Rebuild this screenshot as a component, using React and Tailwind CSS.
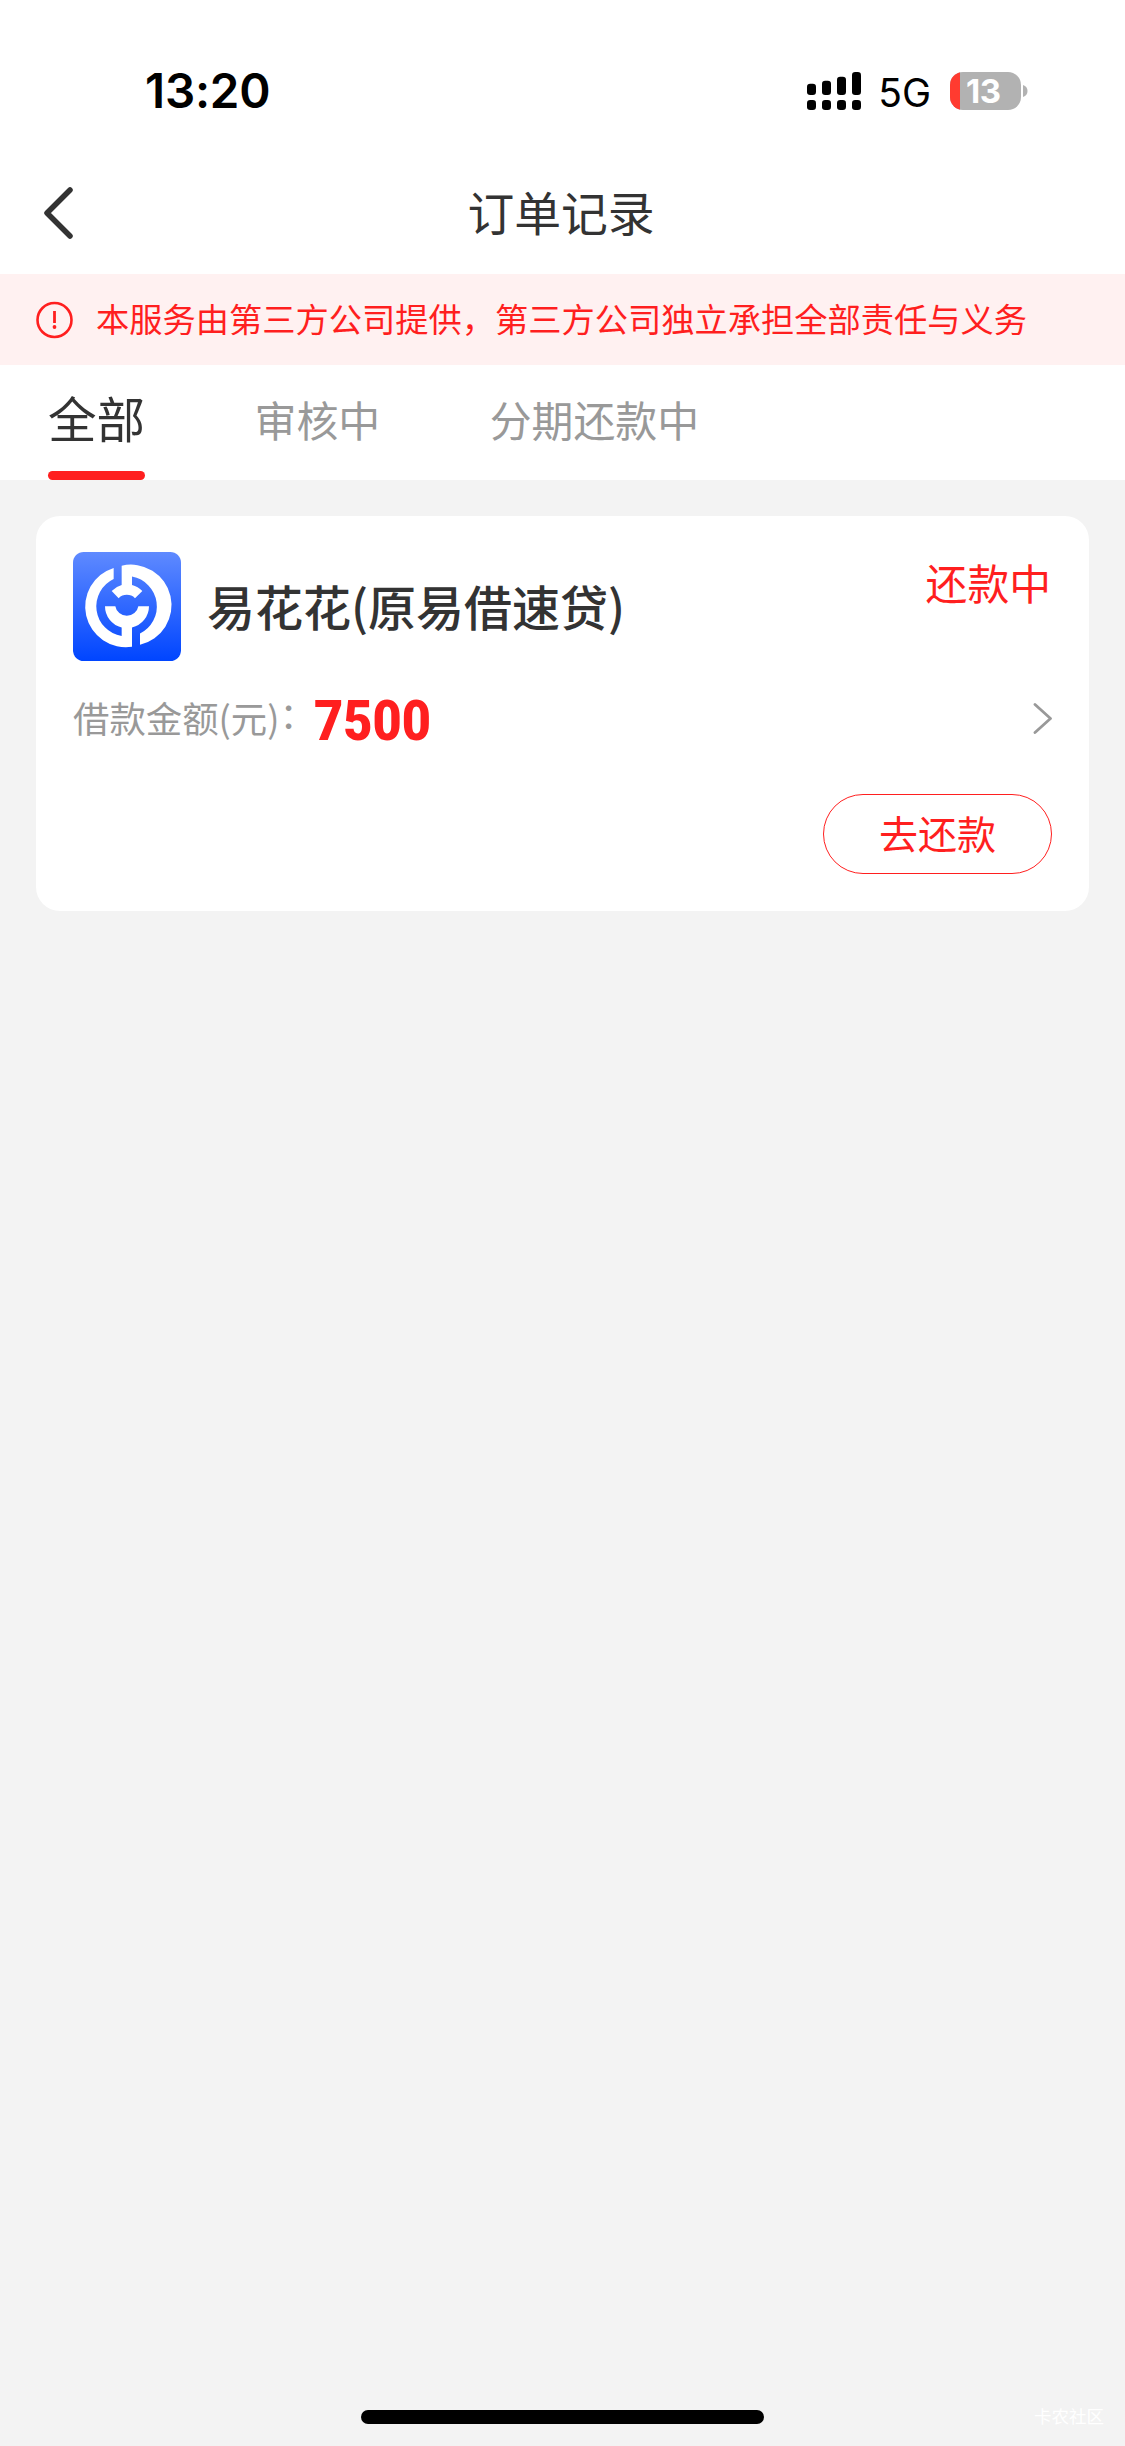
const TABS = [
  { label: "全部", active: true },
  { label: "审核中", active: false },
  { label: "分期还款中", active: false },
];

const ORDERS = [
  { id: 1, name: "易花花(原易借速贷)", status: "还款中", amount: 7500, action: "去还款" },
];

function SignalIcon() {
  return (
    <svg width="54" height="38" viewBox="0 0 54 38" fill="#000">
      <rect x="0" y="11.7" width="9" height="11.3" rx="3.2" />
      <rect x="15" y="8.7" width="9" height="14.3" rx="3.2" />
      <rect x="30" y="4.7" width="9" height="18.3" rx="3.2" />
      <rect x="45" y="0" width="9" height="23" rx="3.2" />
      <rect x="0" y="28" width="9" height="10" rx="3.2" />
      <rect x="15" y="28" width="9" height="10" rx="3.2" />
      <rect x="30" y="28" width="9" height="10" rx="3.2" />
      <rect x="45" y="28" width="9" height="10" rx="3.2" />
    </svg>
  );
}

function Battery({ level }) {
  return (
    <div className="flex items-center">
      <div className="flex h-[38px] w-[71px] items-center overflow-hidden rounded-[13px] bg-[#b2b2b2]">
        <div className="h-full w-[10px] bg-[#ff3b30]" />
        <span className="ml-[6px] font-['Inter'] text-[33px] leading-[38px] font-bold tracking-[-0.5px] text-white">{level}</span>
      </div>
      <svg className="ml-[2px]" width="5" height="12" viewBox="0 0 5 12">
        <path d="M0 0C6 1.5 6 10.5 0 12Z" fill="#b2b2b2" />
      </svg>
    </div>
  );
}

function StatusBar() {
  return (
    <div className="flex h-[152px] items-start justify-between pt-[72px] pr-[97px] pl-[145px]">
      <span className="font-['Inter'] text-[47.5px] leading-[38px] font-semibold tracking-[-0.2px] text-black">13:20</span>
      <div className="flex items-center">
        <SignalIcon />
        <span className="ml-[17px] h-[38px] pt-[2px] font-['Inter'] text-[39px] leading-[38px] text-black">5G</span>
        <div className="ml-[19px]">
          <Battery level={13} />
        </div>
      </div>
    </div>
  );
}

function NavBar() {
  return (
    <div className="grid h-[122px] grid-cols-[1fr_auto_1fr] items-center">
      <svg className="ml-[43px]" width="32" height="54" viewBox="0 0 32 54" fill="none">
        <path d="M27 4L4 27L27 50" stroke="#333" strokeWidth="5.5" strokeLinecap="round" strokeLinejoin="round" />
      </svg>
      <h1 className="pr-[3px] pb-[5px] text-[46.8px] leading-[60px] text-[#333]">订单记录</h1>
    </div>
  );
}

function Notice() {
  return (
    <div className="flex h-[91px] items-center bg-[#fff1f1] pl-[36px] text-[#ff1f1f]">
      <svg width="38" height="38" viewBox="0 0 38 38" fill="none">
        <circle cx="18.5" cy="19" r="17" stroke="currentColor" strokeWidth="2.6" />
        <path d="M18.5 10V22" stroke="currentColor" strokeWidth="2.8" />
        <circle cx="18.5" cy="26" r="1.9" fill="currentColor" />
      </svg>
      <p className="ml-[22px] pb-[4px] text-[33.25px] leading-[48px] whitespace-nowrap">
        本服务由第三方公司提供，第三方公司独立承担全部责任与义务
      </p>
    </div>
  );
}

function Tabs() {
  return (
    <div className="flex h-[115px] gap-[109.5px] bg-white pl-[48px]">
      {TABS.map((tab) => (
        <div key={tab.label} className="flex flex-col justify-between">
          {tab.active ? (
            <span className="pt-[22px] text-[48.5px] leading-[60px] text-[#333]">{tab.label}</span>
          ) : (
            <span className="pt-[24px] text-[41.9px] leading-[60px] text-[#999]">{tab.label}</span>
          )}
          {tab.active && <div className="h-[9px] rounded-full bg-[#ff1f1f]" />}
        </div>
      ))}
    </div>
  );
}

function Logo() {
  return (
    <svg width="108" height="109" viewBox="39 36 324 328" preserveAspectRatio="none">
      <defs>
        <linearGradient id="logoBg" x1="0" y1="0" x2="0" y2="1">
          <stop offset="0" stopColor="#5f8aff" />
          <stop offset="1" stopColor="#0045ff" />
        </linearGradient>
      </defs>
      <rect x="39" y="36" width="324" height="328" rx="32" fill="url(#logoBg)" />
      <path
        fill="#fff"
        d="M161 84A122 122 0 0 0 216 321V263A66 66 0 0 0 267 199H235A35 35 0 0 1 166 199H135A66 66 0 0 0 185 263V289A91 91 0 0 1 161 117Z"
      />
      <path
        fill="#fff"
        d="M185 77A122 122 0 0 1 240 315V281A91 91 0 0 0 216 110V135A66 66 0 0 1 247 153L225 175A35 35 0 0 0 176 175L155 153A66 66 0 0 1 185 135Z"
      />
    </svg>
  );
}

function OrderCard({ order }) {
  return (
    <div className="mx-[36px] mt-[36px] flex h-[395px] flex-col rounded-[24px] bg-white px-[37px] pt-[36px]">
      <div className="flex h-[109px] items-start">
        <Logo />
        <h2 className="ml-[26px] pt-[23px] text-[48px] leading-[60px] font-medium text-[#333]">{order.name}</h2>
        <span className="ml-auto pr-px text-[41.8px] leading-[60px] text-[#ff1f1f]">{order.status}</span>
      </div>
      <div className="mt-[28px] flex h-[60px] items-center">
        <span className="pb-[4px] text-[36.4px] leading-[60px] text-[#999]">借款金额(元)</span>
        <span className="pb-[12px] text-[36.4px] leading-[60px] text-[#999]">：</span>
        <span className="-ml-[2px] origin-left scale-x-[0.9] pt-[4px] font-['Roboto'] text-[56px] leading-[60px] font-black text-[#ff1f1f]">
          {order.amount}
        </span>
        <svg className="ml-auto" width="20" height="34" viewBox="0 0 20 34" fill="none">
          <path d="M3 2.5L18.5 16.5L3 30.5" stroke="#999" strokeWidth="2.8" strokeLinecap="round" strokeLinejoin="round" />
        </svg>
      </div>
      <button className="mt-[45px] h-[80px] w-[229px] self-end rounded-full border border-[#ff1f1f] pb-[4px] text-[39px] leading-[60px] text-[#ff1f1f]">
        {order.action}
      </button>
    </div>
  );
}

export default function App() {
  return (
    <div className="flex h-[2446px] w-[1125px] flex-col overflow-hidden bg-[#f3f3f3] font-['Noto_Sans_CJK_SC',sans-serif]">
      <header className="bg-white">
        <StatusBar />
        <NavBar />
      </header>
      <Notice />
      <Tabs />
      <main className="flex-1">
        {ORDERS.map((order) => (
          <OrderCard key={order.id} order={order} />
        ))}
      </main>
      <footer className="grid h-[36px] grid-cols-[1fr_403px_1fr]">
        <div />
        <div className="h-[14px] rounded-full bg-black" />
        <span className="mr-[21px] justify-self-end text-[17.5px] leading-[12px] text-white">卡农社区</span>
      </footer>
    </div>
  );
}
